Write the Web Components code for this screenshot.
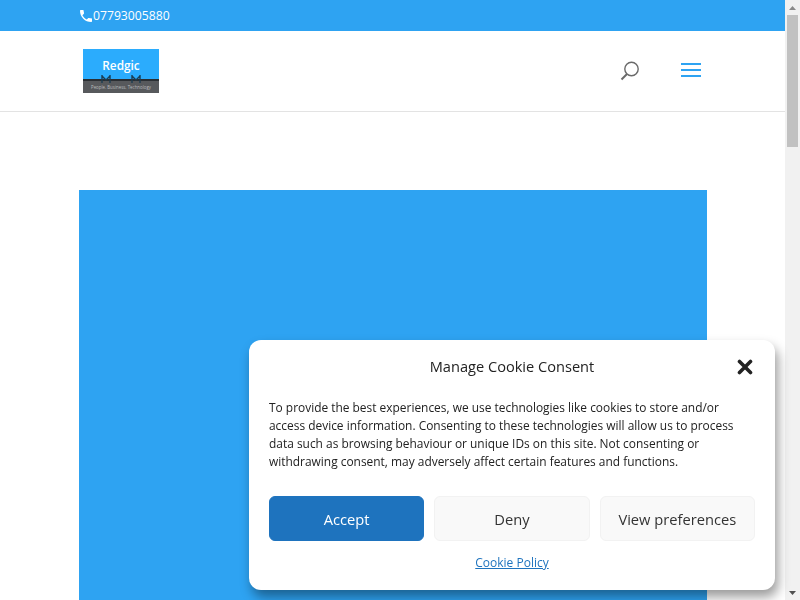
<!DOCTYPE html>
<html lang="en">
<head>
<meta charset="utf-8">
<title>Redgic</title>
<style>
html, body { margin: 0; height: 100%; overflow: hidden; background: #fff; }
body { font-family: "Open Sans", sans-serif; display: flex; height: 600px; }
</style>
</head>
<body>
<site-page>
	<top-bar phone="07793005880"></top-bar>
	<site-header></site-header>
	<hero-block></hero-block>
</site-page>
<fake-scrollbar></fake-scrollbar>
<cookie-modal title="Manage Cookie Consent">
	To provide the best experiences, we use technologies like cookies to store and/or access device information. Consenting to these technologies will allow us to process data such as browsing behaviour or unique IDs on this site. Not consenting or withdrawing consent, may adversely affect certain features and functions.
</cookie-modal>

<script>
(function() {

class SitePage extends HTMLElement {
	constructor() {
		super();
		this.attachShadow({mode: 'open'}).innerHTML = `
			<style>:host { display: flex; flex-direction: column; flex: 1; min-width: 0; height: 600px; overflow: hidden; }</style>
			<slot></slot>`;
	}
}

class TopBar extends HTMLElement {
	constructor() {
		super();
		this.attachShadow({mode: 'open'}).innerHTML = `
			<style>
			:host { display: flex; align-items: center; flex: none; height: 31px; padding-left: 80px; background: #2ea3f2; color: #fff; font-size: 12.2px; font-weight: 500; }
			svg { width: 12px; height: 12px; margin-right: 1px; }
			</style>
			<svg viewBox="3 3 18 18"><path fill="#fff" d="M6.62 10.79c1.44 2.83 3.76 5.14 6.59 6.59l2.200-2.200c.27-.27.67-.36 1.020-.24 1.120.37 2.330.57 3.570.57.55 0 1 .45 1 1V20c0 .55-.45 1-1 1-9.390 0-17-7.610-17-17 0-.55.45-1 1-1h3.500c.55 0 1 .45 1 1 0 1.250.2 2.450.57 3.570.11.35.03.74-.25 1.020l-2.200 2.200z"/></svg>
			<span></span>`;
		this.shadowRoot.querySelector('span').textContent = this.getAttribute('phone');
	}
}

class SiteLogo extends HTMLElement {
	constructor() {
		super();
		this.attachShadow({mode: 'open'}).innerHTML = `
			<style>
			:host { display: flex; flex-direction: column; width: 76px; height: 44px; background: #2bacfd; overflow: hidden; }
			.name { height: 31px; display: flex; align-items: center; justify-content: center; padding-top: 2px; box-sizing: border-box; color: #fff; font: 600 11.800px "Open Sans", sans-serif; }
			.line { position: relative; height: 2px; background: #2b2f33; }
			svg { position: absolute; top: -4px; width: 10px; height: 8px; }
			.strip { flex: 1; background: #57595c; color: #b9bbbd; font: 4.400px/12px "Open Sans", sans-serif; text-align: center; white-space: nowrap; }
			</style>
			<div class="name">Redgic</div>
			<div class="line">
				<svg style="left:18px" viewBox="0 0 10 8" fill="none" stroke="#1c3d52" stroke-width="1.400"><path d="M1 0v8M9 0v8M1 1l4 4 4-4"/></svg>
				<svg style="left:48px" viewBox="0 0 10 8" fill="none" stroke="#1c3d52" stroke-width="1.400"><path d="M1 0v8M9 0v8M1 1l4 4 4-4"/></svg>
			</div>
			<div class="strip">People. Business. Technology</div>`;
	}
}

class SiteHeader extends HTMLElement {
	constructor() {
		super();
		this.attachShadow({mode: 'open'}).innerHTML = `
			<style>
			:host { display: flex; align-items: center; flex: none; height: 80px; padding: 0 84px 0 83px; background: #fff; border-bottom: 1px solid #e3e3e3; }
			.gap { flex: 1; }
			.search { width: 20px; height: 20px; margin-right: 41px; }
			.menu { display: flex; flex-direction: column; gap: 4px; width: 20px; margin-top: -2px; }
			.menu i { display: block; height: 2px; background: #2ea3f2; }
			</style>
			<site-logo></site-logo>
			<div class="gap"></div>
			<svg class="search" viewBox="0 0 20 20" fill="none" stroke="#6a6a6a" stroke-width="1.400"><circle cx="11.500" cy="8" r="6.700"/><path d="M7 13 1.500 18.500" stroke-width="1.900"/></svg>
			<div class="menu"><i></i><i></i><i></i></div>`;
	}
}

class HeroBlock extends HTMLElement {
	constructor() {
		super();
		this.attachShadow({mode: 'open'}).innerHTML = `
			<style>
			:host { display: block; flex: none; width: 628px; height: 500px; margin: 78px 0 0 79px; background: #2ea3f2; }
			</style>`;
	}
}

class FakeScrollbar extends HTMLElement {
	constructor() {
		super();
		this.attachShadow({mode: 'open'}).innerHTML = `
			<style>
			:host { display: flex; flex-direction: column; flex: none; width: 15px; height: 600px; background: #f1f1f1; }
			.arrow { flex: none; height: 15px; display: flex; align-items: center; justify-content: center; }
			.arrow svg { width: 7px; height: 4px; }
			.track { flex: 1; padding: 0 2px; }
			.thumb { height: 132px; background: #c1c1c1; }
			</style>
			<div class="arrow"><svg viewBox="0 0 7 4"><path fill="#8a8a8a" d="M3.500 0 7 4H0z"/></svg></div>
			<div class="track"><div class="thumb"></div></div>
			<div class="arrow"><svg viewBox="0 0 7 4"><path fill="#505050" d="M0 0h7L3.500 4z"/></svg></div>`;
	}
}

class CookieButton extends HTMLElement {
	constructor() {
		super();
		this.attachShadow({mode: 'open'}).innerHTML = `
			<style>
			:host { display: flex; align-items: center; justify-content: center; flex: 1; height: 45px; box-sizing: border-box; border: 1px solid #f2f2f2; border-radius: 6px; background: #f9f9f9; color: #333; font-size: 14.700px; white-space: nowrap; }
			:host([primary]) { background: #1e73be; border-color: #1e73be; color: #fff; }
			</style>
			<slot></slot>`;
	}
}

class CookieModal extends HTMLElement {
	constructor() {
		super();
		this.attachShadow({mode: 'open'}).innerHTML = `
			<style>
			:host { position: fixed; left: 249px; top: 340px; width: 526px; height: 250px; box-sizing: border-box; padding: 0 20px; display: flex; flex-direction: column; background: #fff; border-radius: 12px; box-shadow: 3px 7px 12px rgba(0,0,0,.4); color: #222; }
			.head { position: relative; flex: none; height: 53px; display: flex; align-items: center; justify-content: center; padding-bottom: 2px; box-sizing: border-box; font-size: 14.600px; }
			.close { position: absolute; right: 2px; top: 19px; width: 16px; height: 16px; }
			.body { flex: none; margin: 5px 0 1px; height: 72px; font-size: 11.930px; line-height: 18px; color: #222; }
			.buttons { display: flex; gap: 10px; margin-top: 25px; }
			.foot { display: flex; justify-content: center; margin-top: 13px; font-size: 12px; }
			a { color: #1e73be; text-decoration: underline; }
			</style>
			<div class="head">
				<span class="title"></span>
				<svg class="close" viewBox="0 0 16 16"><path d="M2.500 2.500l11 11M13.500 2.500l-11 11" stroke="#222" stroke-width="3.600" stroke-linecap="round"/></svg>
			</div>
			<div class="body"><slot></slot></div>
			<div class="buttons">
				<cookie-button primary>Accept</cookie-button>
				<cookie-button>Deny</cookie-button>
				<cookie-button>View preferences</cookie-button>
			</div>
			<div class="foot"><a href="#">Cookie Policy</a></div>`;
		this.shadowRoot.querySelector('.title').textContent = this.getAttribute('title');
	}
}

customElements.define('site-page', SitePage);
customElements.define('top-bar', TopBar);
customElements.define('site-logo', SiteLogo);
customElements.define('site-header', SiteHeader);
customElements.define('hero-block', HeroBlock);
customElements.define('fake-scrollbar', FakeScrollbar);
customElements.define('cookie-button', CookieButton);
customElements.define('cookie-modal', CookieModal);
})();
</script>
</body>
</html>
